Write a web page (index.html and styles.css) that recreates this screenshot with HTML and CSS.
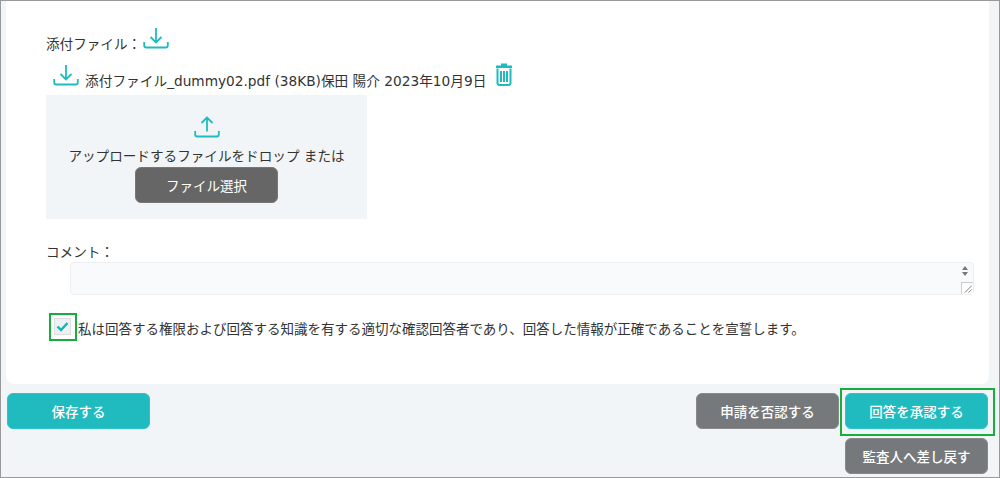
FILE: index.html
```html
<!DOCTYPE html>
<html lang="ja">
<head>
    <meta charset="UTF-8">
    <title>回答の承認</title>
    <link rel="stylesheet" href="styles.css">
</head>
<body>

<div class="frame">
    <div class="panel">
        <div class="attach-head">
            <span>添付ファイル：</span>
            <svg class="icon-transfer" viewBox="0 0 26 22"><path d="M13 1V15M7.500 10L13 15.500L18.500 10M1.200 15V18.500Q1.200 20.500 3.200 20.500H22.800Q24.800 20.500 24.800 18.500V15"/></svg>
        </div>
        <div class="attach-row">
            <svg class="icon-transfer" viewBox="0 0 26 22"><path d="M13 1V15M7.500 10L13 15.500L18.500 10M1.200 15V18.500Q1.200 20.500 3.200 20.500H22.800Q24.800 20.500 24.800 18.500V15"/></svg>
            <span class="attach-name">添付ファイル_dummy02.pdf (38KB)保田 陽介 2023年10月9日</span>
            <svg class="icon-trash" viewBox="0 0 18 24"><path d="M1 3.500H17V6H1ZM6 3.500V1.500H12V3.500" class="trash-lid"/><path d="M2.500 6.500V21Q2.500 23 4.500 23H13.500Q15.500 23 15.500 21V6.500" class="trash-body"/><path d="M6 9V20M9 9V20M12 9V20" class="trash-body"/></svg>
        </div>
        <div class="dropzone">
            <svg class="icon-transfer" viewBox="0 0 26 22"><path d="M13 15.500V1.500M7.500 7L13 1.500L18.500 7M1.200 15V18.500Q1.200 20.500 3.200 20.500H22.800Q24.800 20.500 24.800 18.500V15"/></svg>
            <p>アップロードするファイルをドロップ または</p>
            <button class="btn btn-dark" type="button">ファイル選択</button>
        </div>
        <div class="comment-label">コメント：</div>
        <div class="comment-box">
            <span class="spinner"><i class="up"></i><i class="down"></i></span>
            <span class="grip"><svg viewBox="0 0 12 12"><path d="M10.500 3L3 10.500M10.500 7L7 10.500"/></svg></span>
        </div>
        <label class="oath">
            <span class="check-mark mark-green">
                <svg viewBox="0 0 15 15"><path d="M2.500 7.500L6 11L12.500 4"/></svg>
            </span>
            <span class="oath-text">私は回答する権限および回答する知識を有する適切な確認回答者であり、回答した情報が正確であることを宣誓します。</span>
        </label>
    </div>

    <div class="actions">
        <button class="btn btn-teal" type="button">保存する</button>
        <div class="actions-right">
            <button class="btn btn-gray" type="button">申請を否認する</button>
            <button class="btn btn-teal mark-green" type="button">回答を承認する</button>
            <button class="btn btn-gray" type="button">監査人へ差し戻す</button>
        </div>
    </div>
</div>

</body>
</html>
```

FILE: styles.css
```css
html, body {
    margin: 0;
    padding: 0;
}

body {
    font-family: "DejaVu Sans", "Noto Sans CJK JP", sans-serif;
    font-size: 13.600px;
    color: #333;
}

.frame {
    box-sizing: border-box;
    width: 1000px;
    height: 478px;
    border: 1px solid #999;
    background-color: #f2f5f7;
    overflow: hidden;
}

.panel {
    box-sizing: border-box;
    height: 383px;
    margin: 0 10px 0 5px;
    padding: 26px 40px 0;
    background-color: white;
    border-radius: 0 0 8px 8px;
}

.icon-transfer {
    width: 26px;
    height: 22px;
    fill: none;
    stroke: #20bbbf;
    stroke-width: 1.800;
}

.attach-head {
    display: flex;
    align-items: baseline;
    gap: 2px;
    height: 26px;
}

.attach-row {
    display: flex;
    align-items: baseline;
    height: 33px;
    margin-top: 9px;
    padding-left: 7px;
}

.attach-row svg {
    margin-bottom: -2px;
}

.attach-name {
    margin-left: 6px;
    font-size: 13.700px;
    white-space: nowrap;
}

.icon-trash {
    width: 18px;
    height: 24px;
    margin-left: 9px;
}

.trash-lid {
    fill: #20bbbf;
}

.trash-body {
    fill: none;
    stroke: #20bbbf;
    stroke-width: 2;
}

.dropzone {
    box-sizing: border-box;
    width: 321px;
    height: 124px;
    padding-top: 21px;
    background-color: #f2f5f7;
    text-align: center;
}

.dropzone .icon-transfer {
    display: block;
    margin: 0 auto;
}

.dropzone p {
    margin: 8px 0 0;
    line-height: 20px;
    white-space: nowrap;
}

.btn {
    box-sizing: border-box;
    width: 143px;
    height: 36px;
    padding: 0;
    border-radius: 6px;
    color: white;
    font-family: inherit;
    font-size: 13.500px;
    font-weight: 500;
    cursor: pointer;
}

.btn-dark {
    background-color: #666;
    border: 1px solid #777;
    margin-top: 1px;
    font-weight: 400;
}

.btn-gray {
    background-color: #76797b;
    border: 1px solid #888;
}

.btn-teal {
    background-color: #20bbbf;
    border: 1px solid #2cc4c8;
}

.comment-label {
    margin-top: 23px;
    line-height: 20px;
}

.comment-box {
    position: relative;
    box-sizing: border-box;
    width: 904px;
    height: 33px;
    margin-left: 24px;
    background-color: #f9fafb;
    border: 1px solid #eceff1;
    border-radius: 4px;
}

.spinner {
    position: absolute;
    top: 3px;
    right: 5px;
    display: flex;
    flex-direction: column;
    gap: 2px;
}

.spinner i {
    width: 0;
    height: 0;
    border-left: 3.500px solid transparent;
    border-right: 3.500px solid transparent;
}

.spinner .up {
    border-bottom: 4px solid #777;
}

.spinner .down {
    border-top: 4px solid #777;
}

.grip {
    position: absolute;
    right: 0;
    bottom: 0;
    box-sizing: border-box;
    width: 12px;
    height: 12px;
    border-left: 1px solid #ccc;
    border-top: 1px solid #ccc;
    background-color: white;
}

.grip svg {
    display: block;
    width: 11px;
    height: 11px;
    fill: none;
    stroke: #777;
}

.oath {
    display: flex;
    align-items: flex-start;
    gap: 7px;
    margin: 23px 0 0 8px;
    white-space: nowrap;
}

.oath-text {
    margin-top: 1px;
    font-size: 13.500px;
    line-height: 20px;
}

.check-mark {
    position: relative;
    flex: none;
    box-sizing: border-box;
    width: 17px;
    height: 17px;
    background-color: #eef1f3;
    border: 1px solid #ddd;
}

.check-mark svg {
    display: block;
    width: 15px;
    height: 15px;
    fill: none;
    stroke: #14b3b8;
    stroke-width: 2.400;
}

/* 標示用の緑枠 */
.mark-green {
    position: relative;
}

.mark-green::after {
    content: "";
    position: absolute;
    border: 2px solid #18ad3c;
    pointer-events: none;
}

.check-mark.mark-green::after {
    top: -6px;
    left: -6px;
    width: 24px;
    height: 24px;
}

.btn.mark-green::after {
    top: -6px;
    left: -6px;
    right: -8px;
    bottom: -8px;
}

.actions {
    display: flex;
    justify-content: space-between;
    padding: 9px 11px 0 6px;
}

.actions-right {
    display: flex;
    flex-wrap: wrap;
    justify-content: flex-end;
    gap: 9px 6px;
    width: 292px;
}
```
